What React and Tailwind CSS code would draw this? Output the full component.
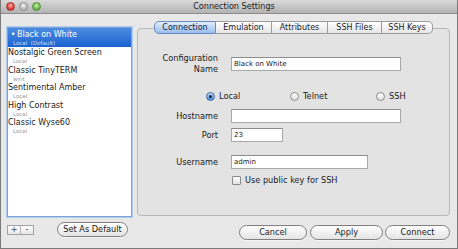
const sessions = [
  { name: 'Black on White', sub: 'Local  (Default)', selected: true },
  { name: 'Nostalgic Green Screen', sub: 'Local' },
  { name: 'Classic TinyTERM', sub: 'wint' },
  { name: 'Sentimental Amber', sub: 'Local' },
  { name: 'High Contrast', sub: 'Local' },
  { name: 'Classic Wyse60', sub: 'Local' },
];

const tabs = [
  { label: 'Connection', w: 'w-[62px]', active: true },
  { label: 'Emulation', w: 'w-[56px]' },
  { label: 'Attributes', w: 'w-[56px]' },
  { label: 'SSH Files', w: 'w-[54px]' },
  { label: 'SSH Keys', w: 'w-[51px]' },
];

function Light({ className }) {
  return <div className={`w-[9px] h-[9px] rounded-full border ${className}`} />;
}

function Radio({ checked }) {
  if (checked) {
    return (
      <div className="w-[9px] h-[9px] rounded-full border border-[#3d67a3] bg-linear-to-b from-[#c4dcf7] to-[#4f8ddc] flex items-center justify-center">
        <div className="w-[3px] h-[3px] rounded-full bg-[#14243b]" />
      </div>
    );
  }
  return <div className="w-[9px] h-[9px] rounded-full border border-[#8a8a8a] bg-linear-to-b from-white to-[#e0e0e0]" />;
}

function Field({ label, width, value, className = '' }) {
  return (
    <div className={`flex items-center ${className}`}>
      <div className="w-[80px] text-right text-[8.2px] leading-[11px]">{label}</div>
      <div className={`ml-[13px] h-[14px] ${width} bg-white border border-[#a8a8a8] border-t-[#8c8c8c] pl-[2px] text-[7px] leading-[12px]`}>
        {value}
      </div>
    </div>
  );
}

function Pill({ children, className = '' }) {
  return (
    <div className={`h-[15px] rounded-full border border-[#7f7f7f] bg-linear-to-b from-white to-[#e4e4e4] shadow-[0_1px_0_#f5f5f5] flex items-center justify-center text-[8.2px] leading-none ${className}`}>
      {children}
    </div>
  );
}

export default function App() {
  return (
    <div className="w-[458px] h-[249px] flex flex-col bg-[#e8e8e8] border-x border-b border-[#7a7a7a] font-['DejaVu_Sans',sans-serif] text-[#1a1a1a] overflow-hidden">
      {/* title bar */}
      <div className="h-[14px] shrink-0 flex items-center border-b border-[#8d8d8d] bg-linear-to-b from-[#dadada] to-[#b3b3b3]">
        <div className="flex items-center gap-[4px] pl-[5px]">
          <Light className="border-[#a8322c] bg-[radial-gradient(circle_at_50%_35%,#ffb3ad,#e0463f_55%,#b52720)]" />
          <Light className="border-[#8f8f8f] bg-[radial-gradient(circle_at_50%_35%,#f2f2f2,#c3c3c3_55%,#a3a3a3)]" />
          <Light className="border-[#4f8a36] bg-[radial-gradient(circle_at_50%_35%,#c8f0a8,#72c150_55%,#4b9a2d)]" />
        </div>
        <div className="flex-1 text-center text-[8.1px] leading-[13px] text-[#222]">Connection Settings</div>
        <div className="w-[30px]" />
      </div>

      <div className="flex flex-1">
        {/* left: session list */}
        <div className="w-[132px] pl-[6px] pt-[13px] flex flex-col">
          <div className="w-[125px] h-[190px] bg-white border border-[#7aa3dc] shadow-[0_0_0_1px_#b3cdee] overflow-hidden">
            {sessions.map((s) =>
              s.selected ? (
                <div key={s.name} className="h-[19px] pt-[2px] bg-linear-to-b from-[#4c8ce0] to-[#1a62d1] text-white">
                  <div className="flex text-[8px] leading-[10px]">
                    <span className="w-[9px] pl-[1px] text-center">•</span>
                    <span>{s.name}</span>
                  </div>
                  <div className="pl-[5px] text-[5.5px] leading-[7px] text-[#cfe0f7] whitespace-pre">{s.sub}</div>
                </div>
              ) : (
                <div key={s.name} className="h-[17.5px] pt-[1px]">
                  <div className="text-[8px] leading-[10px]">{s.name}</div>
                  <div className="pl-[5px] text-[5.5px] leading-[6.5px] text-[#9a9a9a]">{s.sub}</div>
                </div>
              )
            )}
          </div>
          <div className="mt-[5px] h-[15px] flex items-center">
            <div className="flex h-[10px] border border-[#a3a3a3] bg-linear-to-b from-white to-[#e6e6e6] text-[8px] leading-[8px] text-[#444]">
              <div className="w-[13px] flex items-center justify-center border-r border-[#b5b5b5]">+</div>
              <div className="w-[12px] flex items-center justify-center">-</div>
            </div>
            <Pill className="ml-[23px] w-[71px]">Set As Default</Pill>
          </div>
        </div>

        {/* right: settings tabs */}
        <div className="ml-[4px] w-[313px] pt-[7px] flex flex-col">
          <div className="relative z-10 flex justify-center">
            {tabs.map((t, i) => (
              <div
                key={t.label}
                className={`h-[13px] ${t.w} flex items-center justify-center text-[8px] leading-none border-y border-r ${
                  i === 0 ? 'border-l rounded-l-[5px]' : ''
                } ${i === tabs.length - 1 ? 'rounded-r-[5px]' : ''} ${
                  t.active
                    ? 'border-[#6b8cc0] bg-linear-to-b from-[#e2eefc] to-[#98bdec] text-[#12233d]'
                    : 'border-[#9c9c9c] bg-linear-to-b from-white to-[#e6e6e6] text-[#222]'
                }`}
              >
                {t.label}
              </div>
            ))}
          </div>
          <div className="-mt-[6px] h-[188px] rounded-[4px] border border-[#b8b8b8] bg-[#e3e3e3] pt-[24px]">
            <div className="flex items-center">
              <div className="w-[80px] text-right text-[8.2px] leading-[11px]">
                Configuration
                <br />
                Name
              </div>
              <div className="ml-[13px] h-[14px] w-[170px] bg-white border border-[#a8a8a8] border-t-[#8c8c8c] pl-[2px] text-[7px] leading-[12px]">
                Black on White
              </div>
            </div>

            <div className="mt-[15px] h-[12px] pl-[68px] flex items-center text-[8.2px] leading-none">
              <div className="w-[84px] flex items-center gap-[4px]">
                <Radio checked />
                <span>Local</span>
              </div>
              <div className="w-[86px] flex items-center gap-[4px]">
                <Radio />
                <span>Telnet</span>
              </div>
              <div className="flex items-center gap-[4px]">
                <Radio />
                <span>SSH</span>
              </div>
            </div>

            <Field label="Hostname" width="w-[170px]" value="" className="mt-[7px]" />
            <Field label="Port" width="w-[52px]" value="23" className="mt-[5px]" />
            <Field label="Username" width="w-[137px]" value="admin" className="mt-[13px]" />

            <div className="mt-[6px] h-[10px] pl-[94px] flex items-center gap-[4px] text-[8.2px] leading-none">
              <div className="w-[9px] h-[9px] rounded-[1px] border border-[#8a8a8a] bg-linear-to-b from-white to-[#e2e2e2]" />
              <span>Use public key for SSH</span>
            </div>
          </div>

          <div className="mt-[9px] flex">
            <Pill className="ml-[102px] w-[68px]">Cancel</Pill>
            <Pill className="ml-[3px] w-[73px]">Apply</Pill>
            <Pill className="ml-[2px] w-[65px]">Connect</Pill>
          </div>
        </div>
      </div>
    </div>
  );
}
